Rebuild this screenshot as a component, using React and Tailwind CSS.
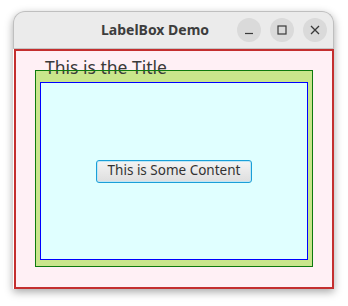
export default function App() {
  return (
    <div className="w-[348px] h-[306px] bg-white pt-[11px] pl-[13px] overflow-hidden" style={{ fontFamily: '"Noto Sans", "Open Sans", sans-serif' }}>
      <div className="w-[321px] flex flex-col rounded-t-[12px] shadow-[0_3px_9px_rgba(0,0,0,0.35)]">
        <div className="h-[38px] bg-[#ebebeb] rounded-t-[12px] border border-[#bfbfbf] border-b-[#c4c4c4] flex items-center">
          <span className="ml-[87px] text-[14px] font-bold text-[#3d3d3d] leading-none">LabelBox Demo</span>
          <div className="ml-auto mr-[6px] flex gap-[9px]">
            <div className="w-[24px] h-[24px] rounded-full bg-[#dadada] flex items-center justify-center">
              <svg width="10" height="10" viewBox="0 0 10 10"><path d="M1 8.5h8" stroke="#3a3a3a" strokeWidth="1.2" /></svg>
            </div>
            <div className="w-[24px] h-[24px] rounded-full bg-[#dadada] flex items-center justify-center">
              <svg width="10" height="10" viewBox="0 0 10 10"><rect x="1" y="1" width="8" height="8" fill="none" stroke="#3a3a3a" strokeWidth="1.2" /></svg>
            </div>
            <div className="w-[24px] h-[24px] rounded-full bg-[#dadada] flex items-center justify-center">
              <svg width="10" height="10" viewBox="0 0 10 10"><path d="M1 1L9 9M9 1L1 9" stroke="#3a3a3a" strokeWidth="1.3" /></svg>
            </div>
          </div>
        </div>
        <div className="ml-[1px] w-[320px] h-[240px] border-2 border-[#c42f2f] bg-[#fff0f5] pt-[19px] pl-[19px] pr-[19px] pb-[20px] flex">
          <div className="relative flex-1 bg-[#c9e68c] p-[2px] flex">
            <span className="absolute left-[10px] top-[-11px] text-[17.5px] leading-none text-[#3a3a3a]">This is the Title</span>
            <div className="absolute inset-0 border-[1.5px] border-[#0e7a0e] pointer-events-none z-10"></div>
            <div className="flex-1 mt-[10px] mx-[3px] mb-[5px] border border-[#0000ff] bg-[#e0ffff] flex items-center justify-center">
              <button className="h-[23px] w-[156px] rounded-[3px] border border-[#1a9fd8] shadow-[inset_0_0_0_1px_#bfe6f5] bg-gradient-to-b from-[#f4f4f4] to-[#dedede] text-[13.5px] text-[#333333] leading-none flex items-center justify-center">
                This is Some Content
              </button>
            </div>
          </div>
        </div>
      </div>
    </div>
  );
}
